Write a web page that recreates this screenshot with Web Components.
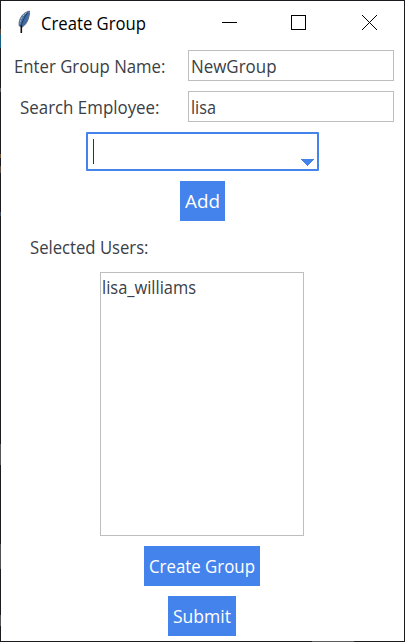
<!DOCTYPE html>
<html lang="en">
<head>
<meta charset="utf-8">
<title>Create Group</title>
<style>
html,body{margin:0;height:100%;overflow:hidden;background:#fff}
</style>
</head>
<body>
<app-window></app-window>
<script>
const define = (name, html, setup) => customElements.define(name, class extends HTMLElement {
  connectedCallback() {
    if (this.shadowRoot) return;
    const t = document.createElement('template');
    t.innerHTML = html;
    this.attachShadow({mode: 'open'}).append(t.content.cloneNode(true));
    if (setup) setup(this, this.shadowRoot);
  }
});

/* A run of text condensed so that it fills the width given by its "w" attribute. */
define('fit-text', `<style>
:host{display:block;white-space:nowrap;height:26px;line-height:26px;flex:none}
span{display:inline-block;white-space:pre;transform-origin:0 50%}
</style><span></span>`, (el, root) => {
  const s = root.querySelector('span');
  s.textContent = el.getAttribute('text');
  const want = +el.getAttribute('w');
  el.style.width = Math.round(want) + 'px';
  const have = s.getBoundingClientRect().width;
  s.style.transform = 'scaleX(' + want / have + ')';
});

define('feather-icon', `<style>:host{display:block;width:14px;height:26px}svg{display:block}</style>
<svg width="14" height="26" viewBox="0 0 14 26">
<path d="M13.500 3C9.500 4 6 6.500 4.300 10.500C3.200 13 2.800 15.500 3.300 18L6.300 19C9.500 17 11.800 13.500 12.800 9C13.500 6.500 13.800 5 13.500 3Z" fill="#3c6cae" stroke="#66696e" stroke-width="1"/>
<path d="M10.500 5C7 7 4.800 10.500 4.200 15.500" fill="none" stroke="#b4bcc4" stroke-width="1" stroke-dasharray="2 1"/>
<path d="M11.500 5C8.500 9 6 14 5.300 18" fill="none" stroke="#26384f" stroke-width="1"/>
<path d="M5.300 17.500V25" stroke="#111" stroke-width="1.600"/>
</svg>`);

define('title-bar', `<style>
:host{display:grid;grid-template-columns:15px 25px 1fr auto;height:44px;color:#000}
feather-icon{margin-top:7px}
fit-text{margin-top:9px}
.c{display:grid;grid-template-columns:70px 70px 70px}
svg{display:block;justify-self:center}
</style><i></i><feather-icon></feather-icon><fit-text text="Create Group" w="105"></fit-text>
<div class="c">
<svg width="70" height="44" shape-rendering="crispEdges"><path d="M28 21.500H43" stroke="#000"/></svg>
<svg width="70" height="44" shape-rendering="crispEdges"><path d="M27.500 14.500h14v14h-14z" fill="none" stroke="#000"/></svg>
<svg width="70" height="44"><path d="M28 14L43 29M43 14L28 29" stroke="#000"/></svg>
</div>`);

define('entry-row', `<style>
:host{display:grid;grid-template-columns:187px 206px;height:31px}
.l{display:flex;justify-content:center;padding-right:10px;padding-top:3px}
.f{box-sizing:border-box;height:31px;border:1px solid #bebebe;background:#fff;padding:2px 0 0 2px}
</style><div class="l"><slot name="label"></slot></div><div class="f"><slot></slot></div>`);

define('combo-box', `<style>
:host{display:flex;box-sizing:border-box;width:233px;height:39px;border:2px solid #4583ec;border-radius:1px;background:#fff;justify-content:space-between;padding:5px 3px 3px 5px}
i{width:1px;height:25px;background:#333}
svg{align-self:flex-end;display:block}
</style><i></i><svg width="13" height="7" shape-rendering="crispEdges"><path d="M0 0H13L6.500 7Z" fill="#4583ec"/></svg>`);

define('push-button', `<style>
:host{display:block;box-sizing:border-box;height:40px;background:#4583ec;color:#fff;padding:7px 5px 0}
</style><slot></slot>`);

define('list-box', `<style>
:host{display:block;box-sizing:border-box;width:204px;height:264px;border:1px solid #bebebe;background:#fff;padding:1px 0 0 1px}
</style><slot></slot>`);

define('app-window', `<style>
:host{display:flex;flex-direction:column;box-sizing:border-box;width:405px;height:642px;padding:1px;
background:linear-gradient(#fff,#fff) 1px 1px/403px 640px no-repeat,
linear-gradient(#1b1a1e 29px,#5b4636 29px 34px,#17607f 34px 48px,#1b1a1e 48px 88px,#55565a 88px 92px,#1b1a1e 92px 154px,#6d5034 154px 158px,#1b1a1e 158px 166px,#5a4a40 166px 173px,#1b1a1e 173px 212px,#3c4560 212px 216px,#1b1a1e 216px 444px,#55565a 444px 465px,#1b1a1e 465px 544px,#505155 544px 569px,#1b1a1e 569px 615px,#55565a 615px 626px,#1b1a1e 626px) 0 0/1px 100% no-repeat,
linear-gradient(90deg,#1b1a1e 312px,#5d5a58 312px 354px,#1b1a1e 354px) 0 100%/100% 1px no-repeat,#1b1a1e;
color:#3a4046;font:400 18.200px "Open Sans","Noto Sans",sans-serif}
entry-row{margin-top:5px}
entry-row + entry-row{margin-top:10px}
.stack{display:flex;flex-direction:column;align-items:center;padding-right:1px}
combo-box{margin-top:10px}
.add{margin-top:10px}
.sel{align-self:flex-start;margin:13px 0 12px 29px}
.create,.submit{margin-top:10px}
</style>
<title-bar></title-bar>
<entry-row><fit-text slot="label" text="Enter Group Name:" w="151.400"></fit-text><fit-text text="NewGroup" w="85.500"></fit-text></entry-row>
<entry-row><fit-text slot="label" text="Search Employee:" w="139.500"></fit-text><fit-text text="lisa" w="25"></fit-text></entry-row>
<div class="stack">
<combo-box></combo-box>
<push-button class="add"><fit-text text="Add" w="35"></fit-text></push-button>
<fit-text class="sel" text="Selected Users:" w="118.500"></fit-text>
<list-box><fit-text text="lisa_williams" w="94"></fit-text></list-box>
<push-button class="create"><fit-text text="Create Group" w="106"></fit-text></push-button>
<push-button class="submit"><fit-text text="Submit" w="58"></fit-text></push-button>
</div>`);
</script>
</body>
</html>
